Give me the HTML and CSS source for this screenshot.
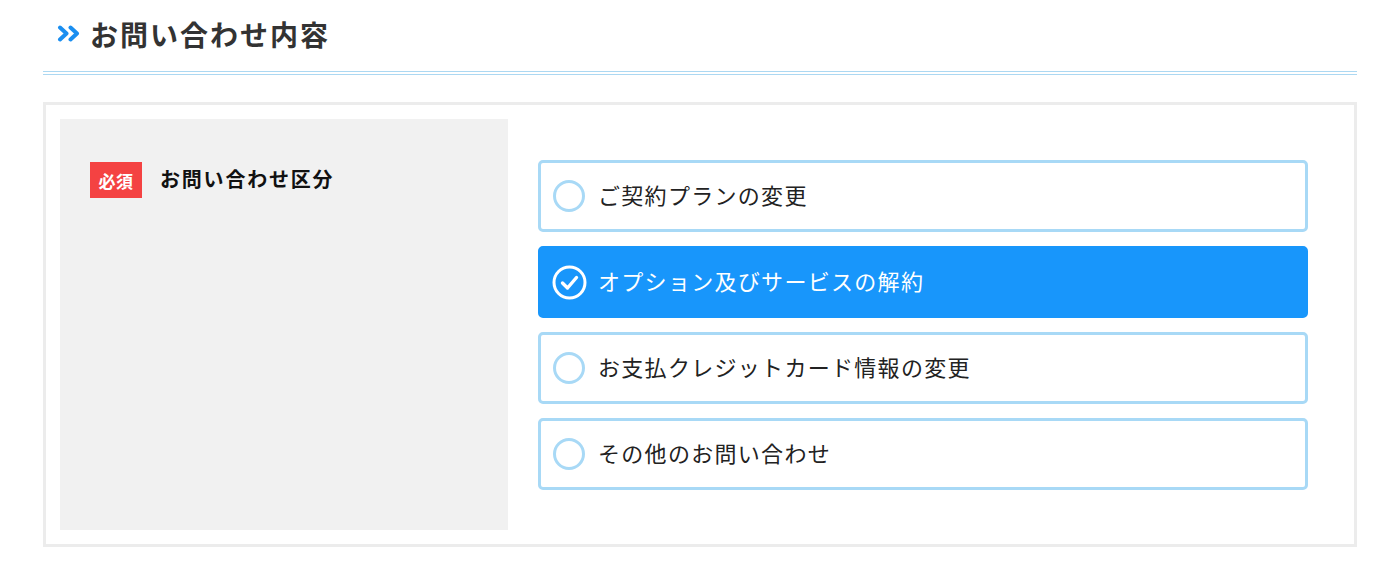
FILE: index.html
```html
<!DOCTYPE html>
<html lang="ja">
<head>
<meta charset="utf-8">
<title>お問い合わせ内容</title>
<link rel="stylesheet" href="styles.css">
</head>
<body>
<div class="page">
  <div class="section-head">
    <svg class="chev" width="23" height="17" viewBox="0 0 23 17" aria-hidden="true">
      <polyline points="3,2.5 9.5,8.5 3,14.5" fill="none" stroke="#1a8ef0" stroke-width="4" stroke-linecap="round" stroke-linejoin="round"/>
      <polyline points="13.5,2.5 20,8.5 13.5,14.5" fill="none" stroke="#1a8ef0" stroke-width="4" stroke-linecap="round" stroke-linejoin="round"/>
    </svg>
    <h2 class="section-title">お問い合わせ内容</h2>
  </div>

  <div class="form-box">
    <div class="form-row">
      <div class="label-cell">
        <span class="badge">必須</span>
        <span class="label-text">お問い合わせ区分</span>
      </div>
      <div class="field-cell">
        <label class="option">
          <span class="radio"></span>
          <span class="opt-text">ご契約プランの変更</span>
        </label>
        <label class="option selected">
          <svg class="check" width="35" height="35" viewBox="0 0 35 35" aria-hidden="true">
            <circle cx="17.5" cy="17.5" r="15.5" fill="none" stroke="#fff" stroke-width="3"/>
            <polyline points="10.5,18 15.5,23 24.5,12.5" fill="none" stroke="#fff" stroke-width="3.4" stroke-linecap="round" stroke-linejoin="round"/>
          </svg>
          <span class="opt-text">オプション及びサービスの解約</span>
        </label>
        <label class="option">
          <span class="radio"></span>
          <span class="opt-text">お支払クレジットカード情報の変更</span>
        </label>
        <label class="option">
          <span class="radio"></span>
          <span class="opt-text">その他のお問い合わせ</span>
        </label>
      </div>
    </div>
  </div>
</div>
</body>
</html>
```

FILE: styles.css
```css
html, body {
  margin: 0;
  padding: 0;
  background: #fff;
}

body {
  font-family: "Noto Sans CJK JP", "Noto Sans", sans-serif;
  color: #222;
}

.page {
  padding: 0 43px;
}

.section-head {
  display: flex;
  align-items: center;
  padding-left: 14px;
  border-bottom: 4px double #acd8f2;
  box-sizing: border-box;
  height: 75px;
  padding-bottom: 4px;
}

.chev {
  display: block;
  margin-right: 10px;
}

.section-title {
  margin: 0;
  font-size: 28px;
  font-weight: 700;
  letter-spacing: 2px;
  color: #333;
  line-height: 1;
}

.form-box {
  margin-top: 27px;
  border: 3px solid #ececec;
  padding: 14px;
}

.form-row {
  display: grid;
  grid-template-columns: 448px 1fr;
}

.label-cell {
  background: #f1f1f1;
  padding: 43px 30px 30px;
  display: flex;
  align-items: flex-start;
  gap: 18px;
}

.badge {
  display: inline-flex;
  align-items: center;
  justify-content: center;
  width: 52px;
  height: 36px;
  background: #f44242;
  color: #fff;
  font-size: 17px;
  font-weight: 700;
  letter-spacing: 0.5px;
}

.label-text {
  line-height: 34px;
  font-size: 20px;
  font-weight: 700;
  letter-spacing: 1.8px;
  color: #111;
}

.field-cell {
  padding: 41px 32px 40px 30px;
  display: flex;
  flex-direction: column;
  gap: 14px;
}

.option {
  display: flex;
  align-items: center;
  height: 72px;
  box-sizing: border-box;
  border: 3px solid #a8d9f6;
  border-radius: 5px;
  padding-left: 12px;
  background: #fff;
  cursor: pointer;
}

.option.selected {
  background: #1896fb;
  border-color: #1896fb;
  padding-left: 11px;
}

.radio {
  width: 32px;
  height: 32px;
  box-sizing: border-box;
  border: 3px solid #a8d9f6;
  border-radius: 50%;
  flex: none;
}

.check {
  display: block;
  flex: none;
}

.opt-text {
  margin-left: 13px;
  padding-bottom: 4px;
  font-size: 22px;
  letter-spacing: 1.3px;
  color: #222;
}

.option.selected .opt-text {
  color: #fff;
  margin-left: 11px;
}
```
